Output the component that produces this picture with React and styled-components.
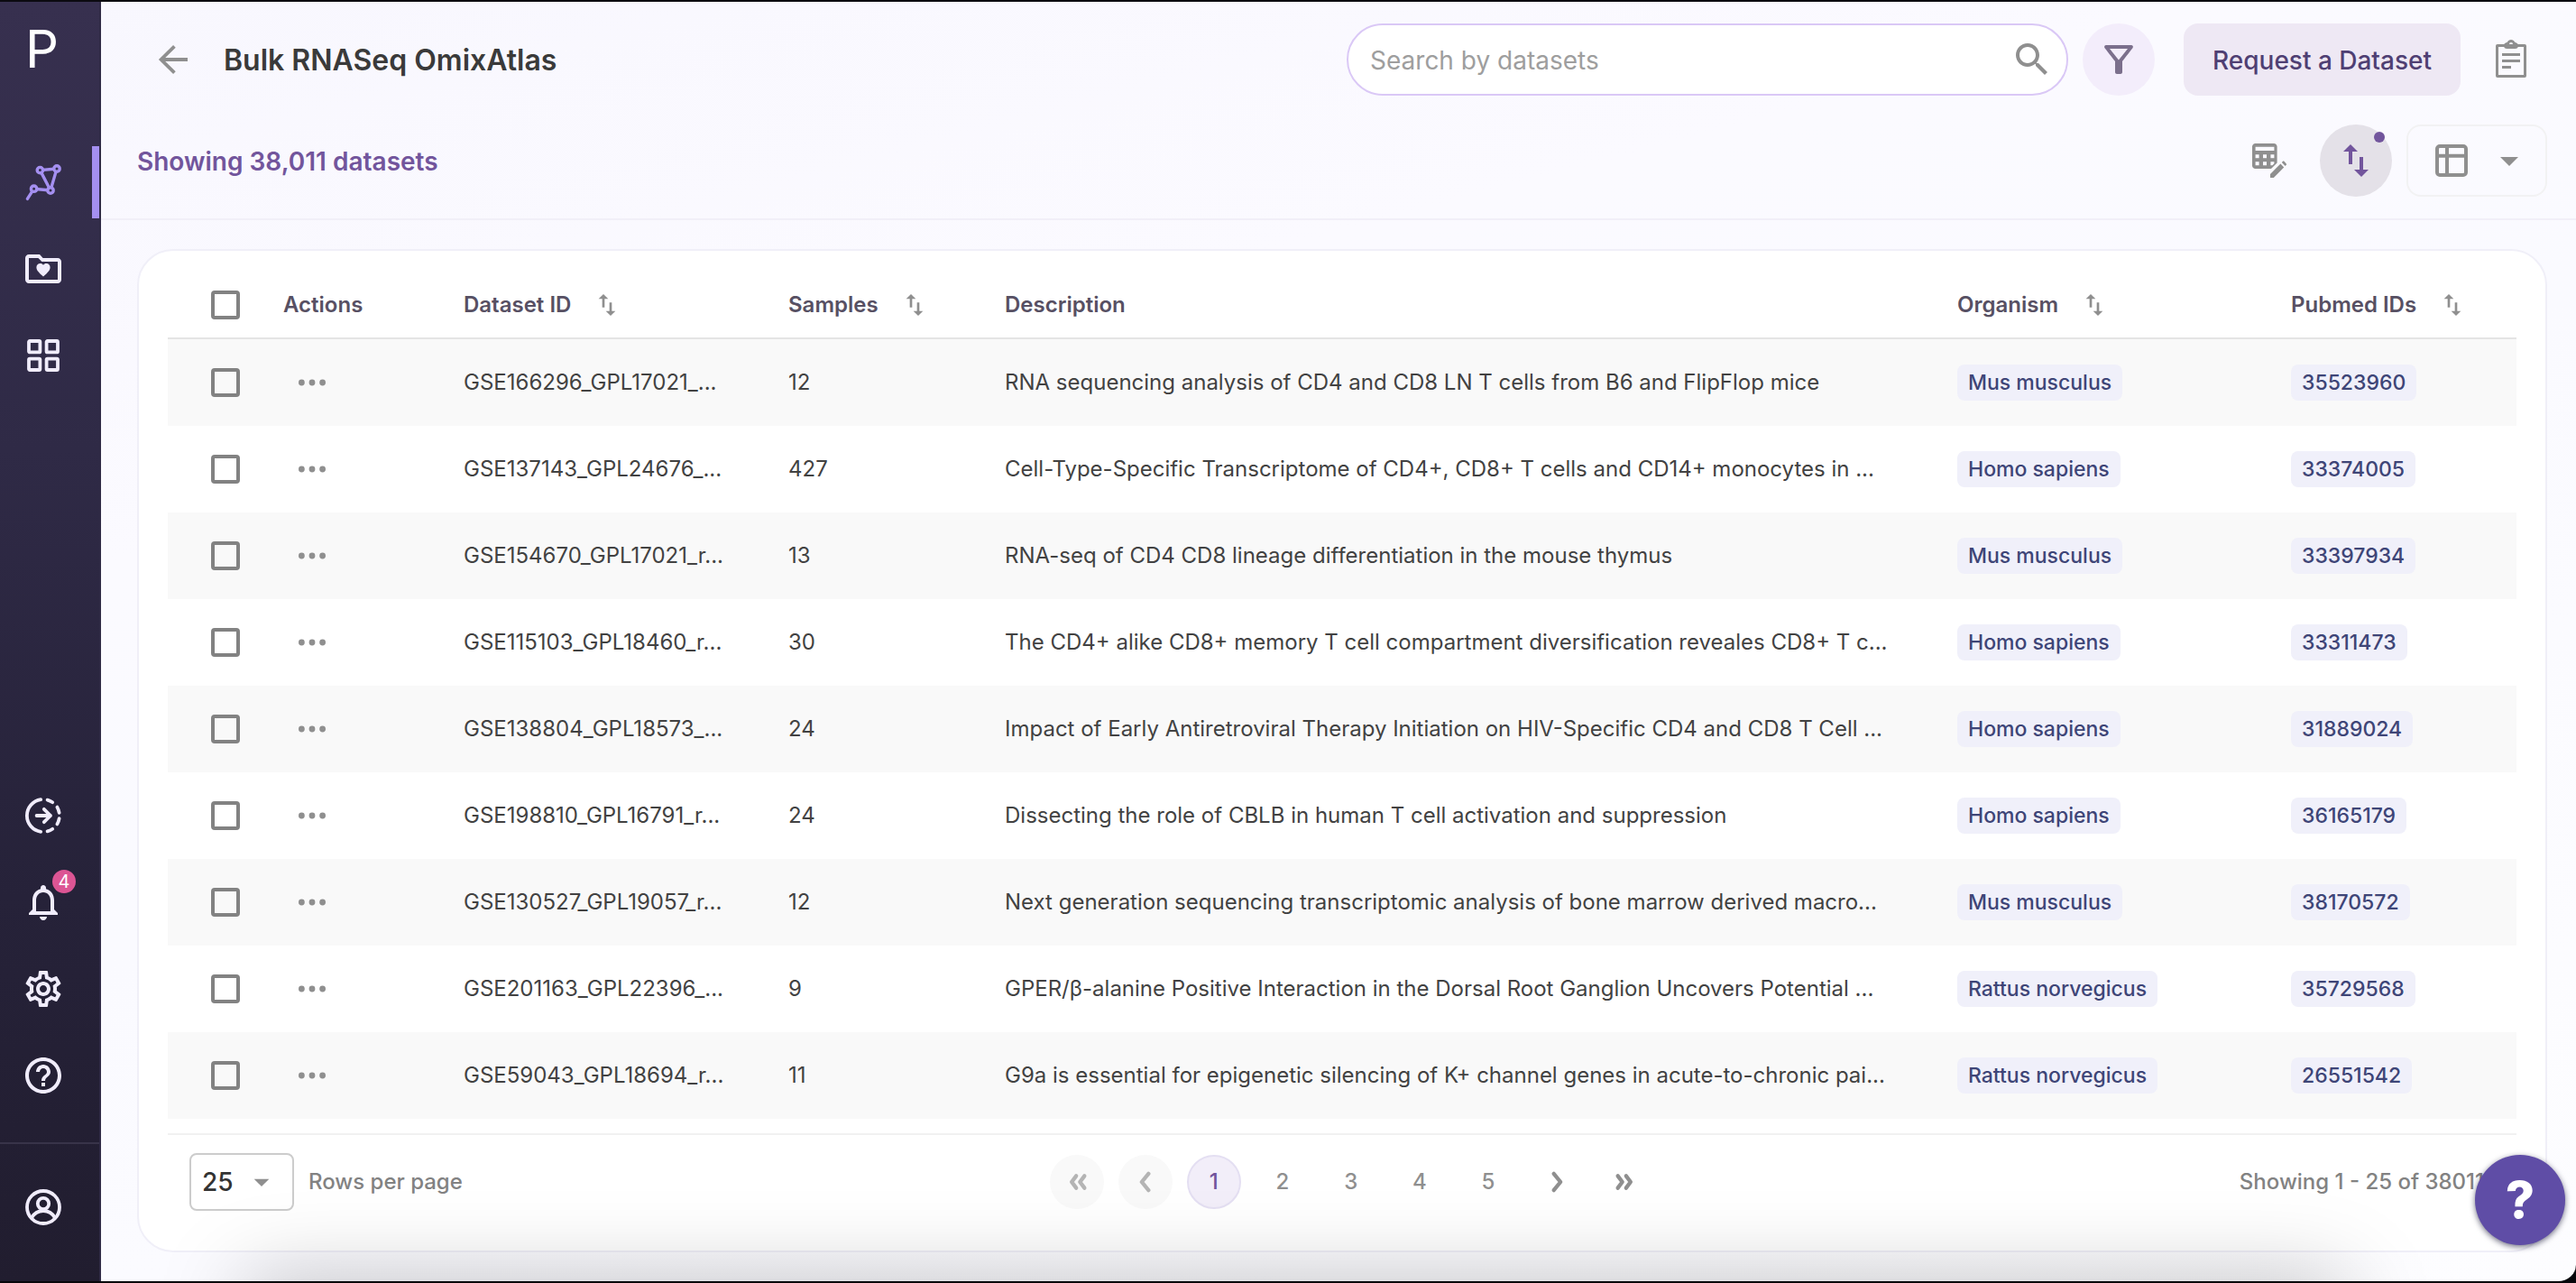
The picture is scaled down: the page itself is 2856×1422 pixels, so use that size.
import React from "react";
import styled, { createGlobalStyle, css } from "styled-components";

const GlobalStyle = createGlobalStyle`
  *, *::before, *::after { box-sizing: border-box; }
  body {
    margin: 0;
    background: #06060a;
    font-family: Inter, "Liberation Sans", sans-serif;
    font-optical-sizing: none;
    font-size: 24px;
    line-height: 32px;
    color: #424242;
  }
  button, input, select { font: inherit; color: inherit; margin: 0; }
`;

/* ---------- shell ---------- */

const Shell = styled.div`
  position: relative;
  display: flex;
  min-height: 100vh;
  border-top: 2px solid #0b0a10;
  border-bottom: 2px solid #06060a;
  border-bottom-right-radius: 20px;
  overflow: hidden;
  background: linear-gradient(165deg, #f8f7fe 0%, #fbfaff 30%, #fafaff 50%, #fdfdff 100%);
`;

const DockShadow = styled.div`
  position: absolute;
  left: 272px;
  right: 256px;
  top: 100%;
  height: 80px;
  box-shadow: 0 0 96px rgba(0, 0, 0, 0.26);
  pointer-events: none;
`;

const Sidebar = styled.nav`
  flex: none;
  display: flex;
  flex-direction: column;
  width: 112px;
  border-right: 2px solid #2f2a45;
  background: linear-gradient(180deg, #37304f 0%, #2f2a46 35%, #262239 70%, #211d2f 100%);
  color: #f0ecfb;
`;

const Logo = styled.div`
  height: 152px;
  padding: 20px 28px;
  font-size: 58px;
  font-weight: 400;
  line-height: 64px;
  color: #ffffff;
`;

const NavItem = styled.a`
  position: relative;
  display: flex;
  align-items: center;
  height: 96px;
  padding-left: 24px;
  color: ${(p) => (p.$active ? "#a48ff0" : "inherit")};
  text-decoration: none;
  ${(p) =>
    p.$active &&
    css`
      &::after {
        content: "";
        position: absolute;
        right: 0;
        top: 8px;
        width: 8px;
        height: 80px;
        background: #a48ff0;
      }
    `}
`;

const NavSpacer = styled.div`
  flex: 1;
`;

const NavFooter = styled.div`
  margin-top: 26px;
  padding: 22px 0 34px;
  border-top: 2px solid #383349;
`;

const Badge = styled.span`
  position: absolute;
  left: 58px;
  top: 12px;
  width: 26px;
  height: 26px;
  border-radius: 50%;
  background: #dc5594;
  color: #ffffff;
  font-size: 20px;
  line-height: 26px;
  text-align: center;
`;

const Content = styled.div`
  flex: 1;
  min-width: 0;
  display: flex;
  flex-direction: column;
`;

/* ---------- header ---------- */

const Header = styled.header`
  display: flex;
  flex-direction: column;
  gap: 32px;
  padding: 24px 32px 24px 40px;
  border-bottom: 2px solid #f1eff8;
`;

const HeaderRow = styled.div`
  display: flex;
  align-items: center;
  height: 80px;
`;

const Group = styled.div`
  display: flex;
  align-items: center;
  gap: ${(p) => p.$gap}px;
  margin-left: ${(p) => (p.$end ? "auto" : "0")};
`;

const IconButton = styled.button`
  flex: none;
  display: flex;
  align-items: center;
  justify-content: center;
  padding: 0;
  border: 0;
  background: none;
  color: #8f8f8f;
  cursor: pointer;
`;

const BackButton = styled(IconButton)`
  margin: 0 32px 0 16px;
`;

const RoundButton = styled(IconButton)`
  position: relative;
  width: 80px;
  height: 80px;
  border-radius: 50%;
  background: ${(p) => p.$bg};
  color: ${(p) => p.$color};
`;

const Dot = styled.span`
  position: absolute;
  right: 8px;
  top: 8px;
  width: 12px;
  height: 12px;
  border-radius: 50%;
  background: #72559c;
`;

const Title = styled.h1`
  margin: 0;
  padding-top: 2px;
  font-size: 32px;
  line-height: 40px;
  font-weight: 600;
  color: #3a3a3a;
`;

const Count = styled.h2`
  margin: 0;
  padding-top: 2px;
  font-size: 28px;
  line-height: 36px;
  font-weight: 600;
  color: #72559c;
`;

const SearchBox = styled.label`
  display: flex;
  align-items: center;
  width: 800px;
  height: 80px;
  padding: 0 14px 0 24px;
  border: 2px solid #dac8f6;
  border-radius: 40px;
  background: #ffffff;
  color: #8f8f8f;
`;

const SearchInput = styled.input`
  flex: 1;
  min-width: 0;
  padding: 2px 0 0;
  border: 0;
  outline: 0;
  background: none;
  font-size: 28px;
  line-height: 36px;
  color: #3a3a3a;
  &::placeholder { color: #9e9e9e; opacity: 1; }
`;

const RequestButton = styled.button`
  height: 80px;
  padding: 2px 32px 0;
  border: 0;
  border-radius: 16px;
  background: #eee8f4;
  color: #4f3f73;
  font-size: 28px;
  line-height: 36px;
  font-weight: 500;
  cursor: pointer;
`;

const ClipButton = styled(IconButton)`
  margin-right: 16px;
`;

const ViewButton = styled(IconButton)`
  width: 156px;
  height: 80px;
  gap: 16px;
  padding-left: 8px;
  border: 2px solid #f2f2f3;
  border-radius: 16px;
`;

/* ---------- table ---------- */

const Main = styled.main`
  padding: 32px 32px 32px 40px;
`;

const Card = styled.section`
  border: 2px solid #f0eff8;
  border-radius: 40px;
  padding: 0 32px 24px;
  background: #ffffff;
`;

const Table = styled.table`
  width: 100%;
  table-layout: fixed;
  border-collapse: separate;
  border-spacing: 0;
`;

const Col = styled.col`
  width: ${(p) => (p.$w ? `${p.$w}px` : "auto")};
`;

const Th = styled.th`
  height: 98px;
  padding: 24px 16px 0;
  border-bottom: 2px solid #e4e4e4;
  text-align: left;
  font-weight: 600;
  color: #575063;
`;

const HeadCell = styled.span`
  display: flex;
  align-items: center;
  gap: 24px;
`;

const Row = styled.tr`
  background: ${(p) => (p.$shaded ? "#f9f9f9" : "#ffffff")};
`;

const Td = styled.td`
  height: 96px;
  padding: 0 16px;
  white-space: nowrap;
`;

const RowMenu = styled(IconButton)`
  margin-left: 8px;
`;

const Check = styled.input`
  appearance: none;
  display: block;
  width: 32px;
  height: 32px;
  margin: 0 0 0 32px;
  border: 4px solid #828282;
  border-radius: 4px;
  background: transparent;
  &:checked { background: #72559c; border-color: #72559c; }
`;

const Chip = styled.span`
  display: inline-block;
  padding: 4px 12px;
  border-radius: 8px;
  background: #f0f0fa;
  color: #3e4577;
  font-size: 23px;
  line-height: 32px;
  font-weight: 500;
  vertical-align: middle;
`;

/* ---------- pagination ---------- */

const Footer = styled.footer`
  display: flex;
  align-items: center;
  justify-content: space-between;
  height: 106px;
  margin-top: 16px;
  padding: 0 36px 0 24px;
  border-top: 2px solid #f1f1f1;
  color: #828282;
  font-weight: 500;
`;

const SelectWrap = styled.span`
  display: grid;
  align-items: center;
  width: 116px;
  height: 64px;
  color: #8f8f8f;
  > * { grid-area: 1 / 1; }
  > svg { justify-self: end; margin-right: 16px; pointer-events: none; }
`;

const Select = styled.select`
  appearance: none;
  width: 100%;
  height: 64px;
  padding: 0 12px;
  border: 2px solid #cccccc;
  border-radius: 8px;
  background: transparent;
  color: #333333;
  font-size: 28px;
  line-height: 36px;
`;

const PageButton = styled.button`
  display: flex;
  align-items: center;
  justify-content: center;
  width: 60px;
  height: 60px;
  padding: 0;
  border: 2px solid ${(p) => (p.$current ? "#e4dff2" : "transparent")};
  border-radius: 50%;
  background: ${(p) => (p.$current ? "#f2eef9" : p.disabled ? "#f9f9f9" : "none")};
  color: ${(p) => (p.$current ? "#72559c" : p.disabled ? "#b4b4b4" : "#8f8f8f")};
  cursor: pointer;
`;

const HelpButton = styled.button`
  position: absolute;
  right: 12px;
  bottom: 40px;
  width: 100px;
  height: 100px;
  padding: 0;
  border: 0;
  border-radius: 50%;
  background: #5f4da6;
  box-shadow: 0 2px 6px rgba(20, 20, 50, 0.6);
  color: #ffffff;
  font-size: 56px;
  line-height: 100px;
  font-weight: 800;
`;

/* ---------- icons ---------- */

const Svg = ({ size = 48, children, ...rest }) => (
  <svg width={size} height={size} viewBox="0 0 24 24" fill="currentColor" aria-hidden="true" {...rest}>
    {children}
  </svg>
);

const Stroke = ({ width = 2, children, ...rest }) => (
  <Svg fill="none" stroke="currentColor" strokeWidth={width} {...rest}>
    {children}
  </Svg>
);

const NetworkIcon = () => (
  <Stroke width={1.7} strokeLinecap="round">
    <path d="M10.2 5.3 19.5 4.5 16 16.5 10.2 5.3M16 16.5 6.8 15.6 3.2 21.2" />
    <g fill="#332e4b">
      <circle cx="10.2" cy="5.3" r="1.6" />
      <circle cx="19.5" cy="4.5" r="1.6" />
      <circle cx="16" cy="16.5" r="1.6" />
      <circle cx="6.8" cy="15.6" r="1.6" />
    </g>
  </Stroke>
);

const FolderHeartIcon = () => (
  <Svg>
    <path d="M20 6h-8.2L10 4H4c-1.1 0-2 .9-2 2v12c0 1.1.9 2 2 2h16c1.1 0 2-.9 2-2V8c0-1.1-.9-2-2-2zm0 12H4V6h5.2l2 2H20v10z" />
    <path d="M12 16.2c-2.4-2-3.8-3.4-3.8-5.1 0-1.2.9-2.1 2.1-2.1.7 0 1.3.3 1.7.9.4-.6 1-.9 1.7-.9 1.2 0 2.1.9 2.1 2.1 0 1.7-1.4 3.1-3.8 5.1z" />
  </Svg>
);

const GridIcon = () => (
  <Stroke width={1.9}>
    <rect x="4" y="4" width="6.2" height="6.2" rx=".5" />
    <rect x="13.8" y="4" width="6.2" height="6.2" rx=".5" />
    <rect x="4" y="13.8" width="6.2" height="6.2" rx=".5" />
    <rect x="13.8" y="13.8" width="6.2" height="6.2" rx=".5" />
  </Stroke>
);

const TransferIcon = () => (
  <Stroke strokeLinecap="round" width={1.9}>
    <path d="M10.6 3.1a9 9 0 0 0 0 17.8" />
    <path d="M14.3 3.3A9 9 0 0 1 17.1 4.6M19.7 7.3A9 9 0 0 1 20.8 10.4M20.8 13.6A9 9 0 0 1 19.7 16.7M17.1 19.4A9 9 0 0 1 14.3 20.7" />
    <path d="M8.3 12H16M12.4 8.4 16 12l-3.6 3.6" strokeLinejoin="round" />
  </Stroke>
);

const BellIcon = () => (
  <Svg>
    <path d="M12 22c1.1 0 2-.9 2-2h-4c0 1.1.9 2 2 2zm6-6v-5c0-3.07-1.63-5.64-4.5-6.32V4c0-.83-.67-1.5-1.5-1.5s-1.5.67-1.5 1.5v.68C7.64 5.36 6 7.92 6 11v5l-2 2v1h16v-1l-2-2zm-2 1H8v-6c0-2.48 1.51-4.5 4-4.5s4 2.02 4 4.5v6z" />
  </Svg>
);

const GearIcon = () => (
  <Svg>
    <path d="M19.43 12.98c.04-.32.07-.64.07-.98 0-.34-.03-.66-.07-.98l2.11-1.65c.19-.15.24-.42.12-.64l-2-3.46c-.09-.16-.26-.25-.44-.25-.06 0-.12.01-.17.03l-2.49 1c-.52-.4-1.08-.73-1.69-.98l-.38-2.65C14.46 2.18 14.25 2 14 2h-4c-.25 0-.46.18-.49.42l-.38 2.65c-.61.25-1.17.59-1.69.98l-2.49-1c-.06-.02-.12-.03-.18-.03-.17 0-.34.09-.43.25l-2 3.46c-.13.22-.07.49.12.64l2.11 1.65c-.04.32-.07.65-.07.98 0 .33.03.66.07.98l-2.11 1.65c-.19.15-.24.42-.12.64l2 3.46c.09.16.26.25.44.25.06 0 .12-.01.17-.03l2.49-1c.52.4 1.08.73 1.69.98l.38 2.65c.03.24.24.42.49.42h4c.25 0 .46-.18.49-.42l.38-2.65c.61-.25 1.17-.59 1.69-.98l2.49 1c.06.02.12.03.18.03.17 0 .34-.09.43-.25l2-3.46c.12-.22.07-.49-.12-.64l-2.11-1.65zm-1.98-1.71c.04.31.05.52.05.73 0 .21-.02.43-.05.73l-.14 1.13.89.7 1.08.84-.7 1.21-1.27-.51-1.04-.42-.9.68c-.43.32-.84.56-1.25.73l-1.06.43-.16 1.13-.2 1.35h-1.4l-.19-1.35-.16-1.13-1.06-.43c-.43-.18-.83-.41-1.23-.71l-.91-.7-1.06.43-1.27.51-.7-1.21 1.08-.84.89-.7-.14-1.13c-.03-.31-.05-.54-.05-.74s.02-.43.05-.73l.14-1.13-.89-.7-1.08-.84.7-1.21 1.27.51 1.04.42.9-.68c.43-.32.84-.56 1.25-.73l1.06-.43.16-1.13.2-1.35h1.39l.19 1.35.16 1.13 1.06.43c.43.18.83.41 1.23.71l.91.7 1.06-.43 1.27-.51.7 1.21-1.07.85-.89.7.14 1.13zM12 8c-2.21 0-4 1.79-4 4s1.79 4 4 4 4-1.79 4-4-1.79-4-4-4zm0 6c-1.1 0-2-.9-2-2s.9-2 2-2 2 .9 2 2-.9 2-2 2z" />
  </Svg>
);

const HelpIcon = () => (
  <Svg>
    <path d="M11 18h2v-2h-2v2zm1-16C6.48 2 2 6.48 2 12s4.48 10 10 10 10-4.48 10-10S17.52 2 12 2zm0 18c-4.41 0-8-3.59-8-8s3.59-8 8-8 8 3.59 8 8-3.59 8-8 8zm0-14c-2.21 0-4 1.79-4 4h2c0-1.1.9-2 2-2s2 .9 2 2c0 2-3 1.75-3 5h2c0-2.25 3-2.5 3-5 0-2.21-1.79-4-4-4z" />
  </Svg>
);

const UserIcon = () => (
  <Stroke width={1.9}>
    <circle cx="12" cy="12" r="9" />
    <circle cx="12" cy="10" r="3.1" />
    <path d="M5.4 18C6.8 15.6 9.2 14 12 14s5.2 1.6 6.6 4" />
  </Stroke>
);

const BackIcon = () => (
  <Stroke width={1.9}>
    <path d="M20 12H5.2M12.7 4.7 5.3 12l7.4 7.3" />
  </Stroke>
);

const SearchIcon = () => (
  <Svg>
    <path d="M15.5 14h-.79l-.28-.27C15.41 12.59 16 11.11 16 9.5 16 5.91 13.09 3 9.5 3S3 5.91 3 9.5 5.91 16 9.5 16c1.61 0 3.09-.59 4.23-1.57l.27.28v.79l5 4.99L20.49 19l-4.99-5zm-6 0C7.01 14 5 11.99 5 9.5S7.01 5 9.5 5 14 7.01 14 9.5 11.99 14 9.5 14z" />
  </Svg>
);

const FilterIcon = () => (
  <Svg>
    <path d="M7 6h10l-5.01 6.3L7 6zm-2.75-.39C6.27 8.2 10 13 10 13v6c0 .55.45 1 1 1h2c.55 0 1-.45 1-1v-6s3.72-4.8 5.74-7.39A1 1 0 0 0 18.95 4H5.04c-.83 0-1.3.95-.79 1.61z" />
  </Svg>
);

const ClipboardIcon = () => (
  <Stroke width={1.5}>
    <rect x="4.25" y="4.25" width="15.5" height="17" rx=".2" />
    <path d="M7 9.2h10M7 12.7h10M7 16.2h5" />
    <path
      d="M8 4.2C8 3 9.2 2.8 9.9 2.4 10.4 1.5 11.1 1 12 1s1.6.5 2.1 1.4C14.8 2.8 16 3 16 4.2 16 5.3 15.3 6 14.3 6H9.7C8.7 6 8 5.3 8 4.2zM12 2.5a1 1 0 1 0 0 2 1 1 0 0 0 0-2z"
      fill="currentColor"
      fillRule="evenodd"
      stroke="none"
    />
  </Stroke>
);

const TableEditIcon = () => (
  <Svg fillRule="evenodd">
    <path d="M4.3 2.5h10.2c1 0 1.8.8 1.8 1.8v8.9l-3.3 3.3H4.3c-1 0-1.8-.8-1.8-1.8V4.3c0-1 .8-1.8 1.8-1.8zM4.3 4.4v2.1h10.4V4.4zM4.3 8.6v2h2v-2zM8.5 8.6v2h2v-2zM12.7 8.6v2h2v-2zM4.3 12.6v2h2v-2zM8.5 12.6v2h2v-2zM12.7 12.6v2h1l1-1v-1z" />
    <path d="M12.5 19.5v2h1.9l5.7-5.7-1.9-2zM18.9 13l1.9 2 .6-.6c.2-.2.2-.5 0-.7L20.2 12.4c-.2-.2-.5-.2-.7 0z" />
  </Svg>
);

const SortIcon = ({ size }) => (
  <Svg size={size}>
    <path d="M9 3 5 6.99h3V14h2V6.99h3L9 3zm7 14.01V10h-2v7.01h-3L15 21l4-3.99h-3z" />
  </Svg>
);

const LayoutIcon = () => (
  <Stroke>
    <rect x="4" y="4" width="16" height="16" rx="1.5" />
    <path d="M9.5 4v16M4 9.4h16" />
  </Stroke>
);

const CaretIcon = ({ size = 48 }) => (
  <Svg size={size}>
    <path d="m7 10 5 5 5-5z" />
  </Svg>
);

const MoreIcon = () => (
  <Svg>
    <circle cx="6.2" cy="12" r="1.7" />
    <circle cx="12" cy="12" r="1.7" />
    <circle cx="17.8" cy="12" r="1.7" />
  </Svg>
);

const chevrons = {
  first: "M11.5 8 8.5 12l3 4M17 8l-3 4 3 4",
  prev: "M14 6.5 9.5 12l4.5 5.5",
  next: "M10 6.5 14.5 12 10 17.5",
  last: "M7 8l3 4-3 4M12.5 8l3 4-3 4",
};

const Chevron = ({ kind }) => (
  <Stroke size={40} width={2.6} strokeLinecap="round" strokeLinejoin="round">
    <path d={chevrons[kind]} />
  </Stroke>
);

/* ---------- data ---------- */

const mouse = "Mus musculus";
const human = "Homo sapiens";
const rat = "Rattus norvegicus";

const rows = [
  ["GSE166296_GPL17021_...", 12, "RNA sequencing analysis of CD4 and CD8 LN T cells from B6 and FlipFlop mice", mouse, "35523960"],
  ["GSE137143_GPL24676_...", 427, "Cell-Type-Specific Transcriptome of CD4+, CD8+ T cells and CD14+ monocytes in ...", human, "33374005"],
  ["GSE154670_GPL17021_r...", 13, "RNA-seq of CD4 CD8 lineage differentiation in the mouse thymus", mouse, "33397934"],
  ["GSE115103_GPL18460_r...", 30, "The CD4+ alike CD8+ memory T cell compartment diversification reveales CD8+ T c...", human, "33311473"],
  ["GSE138804_GPL18573_...", 24, "Impact of Early Antiretroviral Therapy Initiation on HIV-Specific CD4 and CD8 T Cell ...", human, "31889024"],
  ["GSE198810_GPL16791_r...", 24, "Dissecting the role of CBLB in human T cell activation and suppression", human, "36165179"],
  ["GSE130527_GPL19057_r...", 12, "Next generation sequencing transcriptomic analysis of bone marrow derived macro...", mouse, "38170572"],
  ["GSE201163_GPL22396_...", 9, "GPER/β-alanine Positive Interaction in the Dorsal Root Ganglion Uncovers Potential ...", rat, "35729568"],
  ["GSE59043_GPL18694_r...", 11, "G9a is essential for epigenetic silencing of K+ channel genes in acute-to-chronic pai...", rat, "26551542"],
];

const columns = [
  { label: "Actions" },
  { label: "Dataset ID", sortable: true },
  { label: "Samples", sortable: true },
  { label: "Description" },
  { label: "Organism", sortable: true },
  { label: "Pubmed IDs", sortable: true },
];

const widths = [112, 200, 360, 240, null, 370, 266];

export default function App() {
  return (
    <>
      <GlobalStyle />
      <Shell>
        <Sidebar aria-label="Main">
          <Logo>P</Logo>
          <NavItem href="#atlas" $active aria-label="OmixAtlas"><NetworkIcon /></NavItem>
          <NavItem href="#workspaces" aria-label="Workspaces"><FolderHeartIcon /></NavItem>
          <NavItem href="#apps" aria-label="Applications"><GridIcon /></NavItem>
          <NavSpacer />
          <NavItem href="#transfers" aria-label="Transfers"><TransferIcon /></NavItem>
          <NavItem href="#notifications" aria-label="Notifications">
            <BellIcon />
            <Badge>4</Badge>
          </NavItem>
          <NavItem href="#settings" aria-label="Settings"><GearIcon /></NavItem>
          <NavItem href="#help" aria-label="Help"><HelpIcon /></NavItem>
          <NavFooter>
            <NavItem href="#account" aria-label="Account"><UserIcon /></NavItem>
          </NavFooter>
        </Sidebar>

        <Content>
          <Header>
            <HeaderRow>
              <BackButton aria-label="Back"><BackIcon /></BackButton>
              <Title>Bulk RNASeq OmixAtlas</Title>
              <Group $gap={32} $end>
                <Group $gap={16}>
                  <SearchBox>
                    <SearchInput type="text" placeholder="Search by datasets" aria-label="Search by datasets" />
                    <SearchIcon />
                  </SearchBox>
                  <RoundButton $bg="#f3edfb" $color="#7b6f8c" aria-label="Filter"><FilterIcon /></RoundButton>
                </Group>
                <RequestButton>Request a Dataset</RequestButton>
                <ClipButton aria-label="Requests"><ClipboardIcon /></ClipButton>
              </Group>
            </HeaderRow>
            <HeaderRow>
              <Count>Showing 38,011 datasets</Count>
              <Group $gap={32} $end>
                <IconButton aria-label="Edit columns"><TableEditIcon /></IconButton>
                <Group $gap={16}>
                  <RoundButton $bg="#e4e1e8" $color="#72559c" aria-label="Sort">
                    <SortIcon />
                    <Dot />
                  </RoundButton>
                  <ViewButton aria-label="Table view" aria-haspopup="menu">
                    <LayoutIcon />
                    <CaretIcon />
                  </ViewButton>
                </Group>
              </Group>
            </HeaderRow>
          </Header>

          <Main>
            <Card>
              <Table>
                <colgroup>
                  {widths.map((w, i) => <Col key={i} $w={w} />)}
                </colgroup>
                <thead>
                  <tr>
                    <Th scope="col"><Check type="checkbox" aria-label="Select all datasets" /></Th>
                    {columns.map((c) => (
                      <Th key={c.label} scope="col">
                        <HeadCell>
                          {c.label}
                          {c.sortable && (
                            <IconButton aria-label={`Sort by ${c.label}`}><SortIcon size={32} /></IconButton>
                          )}
                        </HeadCell>
                      </Th>
                    ))}
                  </tr>
                </thead>
                <tbody>
                  {rows.map(([id, samples, description, organism, pubmed], i) => (
                    <Row key={id} $shaded={i % 2 === 0}>
                      <Td><Check type="checkbox" aria-label={`Select ${id}`} /></Td>
                      <Td>
                        <RowMenu aria-label={`Actions for ${id}`}><MoreIcon /></RowMenu>
                      </Td>
                      <Td>{id}</Td>
                      <Td>{samples}</Td>
                      <Td>{description}</Td>
                      <Td><Chip>{organism}</Chip></Td>
                      <Td><Chip>{pubmed}</Chip></Td>
                    </Row>
                  ))}
                </tbody>
              </Table>
              <Footer>
                <Group as="label" $gap={16}>
                  <SelectWrap>
                    <Select defaultValue="25">
                      <option>10</option>
                      <option>25</option>
                      <option>50</option>
                    </Select>
                    <CaretIcon size={40} />
                  </SelectWrap>
                  Rows per page
                </Group>
                <Group $gap={16}>
                  <PageButton disabled aria-label="First page"><Chevron kind="first" /></PageButton>
                  <PageButton disabled aria-label="Previous page"><Chevron kind="prev" /></PageButton>
                  {[1, 2, 3, 4, 5].map((n) => (
                    <PageButton key={n} $current={n === 1}>{n}</PageButton>
                  ))}
                  <PageButton aria-label="Next page"><Chevron kind="next" /></PageButton>
                  <PageButton aria-label="Last page"><Chevron kind="last" /></PageButton>
                </Group>
                <span>Showing 1 - 25 of 38011</span>
              </Footer>
            </Card>
          </Main>
        </Content>
        <DockShadow />
        <HelpButton aria-label="Help centre">?</HelpButton>
      </Shell>
    </>
  );
}
